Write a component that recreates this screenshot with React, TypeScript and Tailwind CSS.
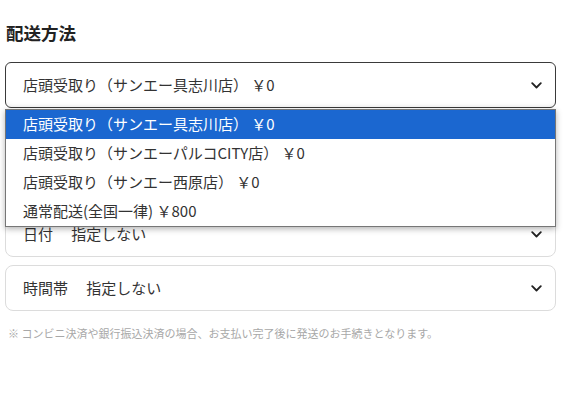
import React from 'react';

const options = [
  '店頭受取り（サンエー具志川店） ￥0',
  '店頭受取り（サンエーパルコCITY店） ￥0',
  '店頭受取り（サンエー西原店） ￥0',
  '通常配送(全国一律) ￥800',
];

const Chevron: React.FC = () => (
  <svg width="11" height="7" viewBox="0 0 11 7" fill="none" className="shrink-0">
    <path d="M1.2 1.2 L5.5 5.5 L9.8 1.2" stroke="#222" strokeWidth="1.8" strokeLinecap="round" strokeLinejoin="round" />
  </svg>
);

const SelectBox: React.FC<{ label: string; active?: boolean; className?: string }> = ({
  label,
  active,
  className,
}) => (
  <div
    className={`flex h-[46px] items-center justify-between bg-white pl-[17px] pr-[13px] text-[15px] text-[#333] ${
      active ? 'rounded-[6px] border border-[#3a3a3a] shadow-[inset_0_-4px_6px_-4px_rgba(0,0,0,0.08)]' : 'rounded-[8px] border border-[#dcdcdc]'
    } ${className ?? ''}`}
  >
    <span className="whitespace-pre">{label}</span>
    <Chevron />
  </div>
);

export default function App() {
  return (
    <div
      className="relative min-h-[403px] w-[565px] bg-white pl-[5px] pr-[9px] pt-[21px]"
      style={{ fontFamily: '"Noto Sans CJK JP", "Noto Sans", sans-serif' }}
    >
      <h2 className="pl-[1px] text-[17.5px] font-bold leading-[24px] text-[#222]">配送方法</h2>

      <div className="relative mt-[17px]">
        <SelectBox label="店頭受取り（サンエー具志川店） ￥0" active />

        {/* Open dropdown list */}
        <div className="absolute left-0 right-0 top-[47px] z-10 border border-[#767676] bg-white shadow-[0_2px_6px_rgba(0,0,0,0.3)]">
          {options.map((opt, i) => (
            <div
              key={opt}
              className={`flex h-[29px] items-center whitespace-pre pl-[17px] text-[15px] ${
                i === 0 ? 'bg-[#1b67d0] text-white' : 'text-[#333]'
              }`}
            >
              {opt}
            </div>
          ))}
        </div>
      </div>

      <SelectBox label="日付　 指定しない" className="mt-[103px]" />
      <SelectBox label="時間帯　 指定しない" className="mt-[8px]" />

      <p className="mt-[14px] pl-[3px] text-[11px] leading-[16px] text-[#a8a8a8]">
        ※ コンビニ決済や銀行振込決済の場合、お支払い完了後に発送のお手続きとなります。
      </p>
    </div>
  );
}
